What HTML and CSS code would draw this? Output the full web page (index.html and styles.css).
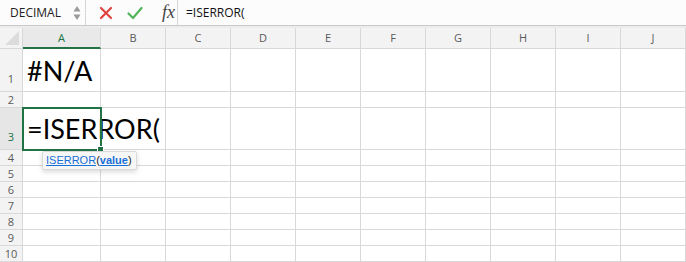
FILE: index.html
```html
<!DOCTYPE html>
<html lang="en">
<head>
  <meta charset="UTF-8" />
  <title>ISERROR</title>
  <link rel="stylesheet" href="styles.css">
</head>
<body>

<div class="formula-bar">
  <div class="name-box">
    <span>DECIMAL</span>
    <svg class="spin" width="8" height="16" viewBox="0 0 8 16">
      <path d="M4 1 L7.5 6.5 L0.5 6.5 Z" fill="#9a9a9a"/>
      <path d="M4 15 L7.5 9.5 L0.5 9.5 Z" fill="#9a9a9a"/>
    </svg>
  </div>
  <div class="actions">
    <svg width="14" height="14" viewBox="0 0 14 14">
      <path d="M2 2 L12 12 M12 2 L2 12" stroke="#e0443e" stroke-width="2.2" stroke-linecap="round"/>
    </svg>
    <svg width="16" height="14" viewBox="0 0 16 14">
      <path d="M1.5 7.5 L6 12 L14.5 2" stroke="#52b55a" stroke-width="2.2" fill="none" stroke-linecap="round" stroke-linejoin="round"/>
    </svg>
    <span class="fx">fx</span>
  </div>
  <div class="formula">=ISERROR(</div>
</div>

<div class="sheet">
  <div class="grid">
    <div class="corner"><span class="tri"></span></div>
    <div class="col-head active">A</div>
    <div class="col-head">B</div>
    <div class="col-head">C</div>
    <div class="col-head">D</div>
    <div class="col-head">E</div>
    <div class="col-head">F</div>
    <div class="col-head">G</div>
    <div class="col-head">H</div>
    <div class="col-head">I</div>
    <div class="col-head">J</div>
  </div>
  <div id="rows"></div>

  <div class="tooltip"><a>ISERROR</a>(<a class="arg">value</a>)</div>
</div>

<script>
  // row heights in px, row 1 and 3 are tall
  const heights = [43, 16, 42, 16, 16, 16, 16, 16, 16, 16];
  const content = { 1: "#N/A", 3: "=ISERROR(" };
  const rows = document.getElementById("rows");
  heights.forEach((h, i) => {
    const n = i + 1;
    const row = document.createElement("div");
    row.className = "grid row" + (n === 3 ? " selected" : "") + (h > 16 ? " tall" : "");
    row.style.height = h + "px";
    let html = `<div class="row-head">${n}</div>`;
    html += `<div class="cell big">${content[n] || ""}</div>`;
    for (let c = 0; c < 9; c++) html += `<div class="cell"></div>`;
    row.innerHTML = html;
    rows.appendChild(row);
  });
</script>

</body>
</html>
```

FILE: styles.css
```css
body {
  margin: 0;
  font-family: "Open Sans", "Liberation Sans", sans-serif;
  background: #fff;
  overflow: hidden;
}
.formula-bar {
  height: 25px;
  display: flex;
  align-items: center;
  background: #fcfcfc;
  border-bottom: 1px solid #c9c9c9;
}
.name-box {
  width: 86px;
  height: 25px;
  box-sizing: border-box;
  display: flex;
  align-items: center;
  padding-left: 10px;
  border-right: 1px solid #d6d6d6;
  font-size: 12px;
  color: #222;
}
.name-box span {
  flex: 1;
}
.name-box .spin {
  margin-right: 4px;
}
.actions {
  width: 92px;
  height: 25px;
  box-sizing: border-box;
  display: flex;
  align-items: center;
  gap: 14px;
  padding-left: 13px;
  border-right: 1px solid #d6d6d6;
}
.fx {
  font-family: "Liberation Serif", serif;
  font-style: italic;
  font-size: 18px;
  color: #444;
  margin-left: 5px;
}
.formula {
  padding-left: 8px;
  font-size: 12px;
  color: #111;
}
.sheet {
  position: relative;
  border-top: 2px solid #ececec;
}
.grid {
  display: grid;
  grid-template-columns: 23px 78px repeat(9, 65px);
}
.grid > div {
  box-sizing: border-box;
  border-right: 1px solid #d8d8d8;
  border-bottom: 1px solid #d8d8d8;
}
.corner {
  background: #f3f3f3;
  position: relative;
}
.tri {
  position: absolute;
  right: 3px;
  bottom: 3px;
  width: 0;
  height: 0;
  border-left: 14px solid transparent;
  border-bottom: 14px solid #dcdcdc;
}
.col-head {
  height: 21px;
  background: #f3f3f3;
  text-align: center;
  font-size: 11px;
  line-height: 20px;
  color: #5a5a5a;
}
.col-head.active {
  color: #217346;
  background: #e9e9e9;
  border-bottom: 2px solid #217346 !important;
  line-height: 19px;
}
.row-head {
  background: #f3f3f3;
  font-size: 11px;
  color: #5a5a5a;
  text-align: center;
  display: flex;
  align-items: flex-end;
  justify-content: center;
  line-height: 15px;
}
.tall .row-head {
  padding-bottom: 5px;
}
.selected .row-head {
  color: #217346;
  background: #e6e6e6;
}
.cell.big {
  font-family: "Lato", "Liberation Sans", sans-serif;
  font-size: 27px;
  color: #000;
  padding-left: 4px;
  white-space: nowrap;
  overflow: visible;
  display: flex;
  align-items: center;
}
.selected .cell.big {
  outline: 2px solid #217346;
  outline-offset: -1px;
  position: relative;
  border-right-color: transparent;
}
.selected .cell.big::after {
  content: "";
  position: absolute;
  right: -4px;
  bottom: -3px;
  width: 5px;
  height: 4px;
  background: #217346;
  border: 1px solid #fff;
}
.tooltip {
  position: absolute;
  left: 42px;
  top: 123px;
  padding: 2px 4px 3px 3px;
  background: #f7f7f7;
  border: 1px solid #dadada;
  border-radius: 2px;
  box-shadow: 0 2px 5px rgba(0,0,0,0.15);
  font-family: "Liberation Sans", sans-serif;
  font-size: 11px;
  color: #222;
}
.tooltip a {
  color: #1a6fd6;
  text-decoration: underline;
}
.tooltip a.arg {
  font-weight: bold;
}
```
